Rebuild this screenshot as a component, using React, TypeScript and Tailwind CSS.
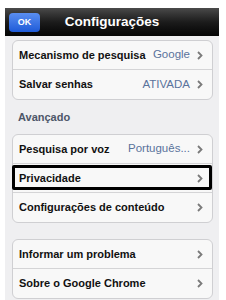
import React from "react";

const Chevron = () => (
  <svg width="6" height="9" viewBox="0 0 6 9" className="shrink-0">
    <path d="M1 1 L4.5 4.5 L1 8" fill="none" stroke="#7a7a7a" strokeWidth="1.8" />
  </svg>
);

type RowProps = { label: string; value?: string; last?: boolean; boxed?: boolean };

const Row = ({ label, value, last, boxed }: RowProps) => (
  <div
    className={`relative flex h-[29px] items-center justify-between pl-[6px] pr-[9px] ${
      last ? "" : "border-b border-[#d4d4d6]"
    }`}
  >
    <span className="text-[11px] font-bold text-[#111]">{label}</span>
    <div className="flex items-center gap-[7px]">
      {value && <span className="text-[11.5px] text-[#5a739c]">{value}</span>}
      <Chevron />
    </div>
    {boxed && (
      <div className="absolute left-[-1px] right-0 top-[1px] bottom-[2px] rounded-[2px] border-[3px] border-black" />
    )}
  </div>
);

const Card = ({ children, className = "" }: { children: React.ReactNode; className?: string }) => (
  <div className={`ml-[7px] mr-[6px] rounded-[6px] border border-[#cfcfd2] bg-[#f8f8f8] ${className}`}>
    {children}
  </div>
);

export default function App() {
  return (
    <div
      className="h-[300px] w-[226px] overflow-hidden bg-white pl-[5px] pr-[7px] pt-[8px]"
      style={{ fontFamily: '"Liberation Sans", Arial, sans-serif' }}
    >
      <div className="relative flex h-[28px] items-center justify-center bg-gradient-to-b from-[#4a4a4a] via-[#1c1c1c] to-[#050505]">
        <div className="absolute left-[4px] top-[5px] flex h-[19px] w-[31px] items-center justify-center rounded-[4px] bg-gradient-to-b from-[#5a8ef0] to-[#1d5ad8] text-[9px] font-bold text-white">
          OK
        </div>
        <span className="text-[13.5px] font-bold text-white">Configurações</span>
      </div>
      <div className="h-[264px] bg-[#efeff1] pt-[4px]">
        <Card>
          <Row label="Mecanismo de pesquisa" value="Google" />
          <Row label="Salvar senhas" value="ATIVADA" last />
        </Card>
        <div className="flex h-[34px] items-center pl-[13px] text-[11px] font-bold text-[#4d5668]">
          Avançado
        </div>
        <Card>
          <Row label="Pesquisa por voz" value="Português..." />
          <Row label="Privacidade" boxed />
          <Row label="Configurações de conteúdo" last />
        </Card>
        <Card className="mt-[16px]">
          <Row label="Informar um problema" />
          <Row label="Sobre o Google Chrome" last />
        </Card>
      </div>
    </div>
  );
}
